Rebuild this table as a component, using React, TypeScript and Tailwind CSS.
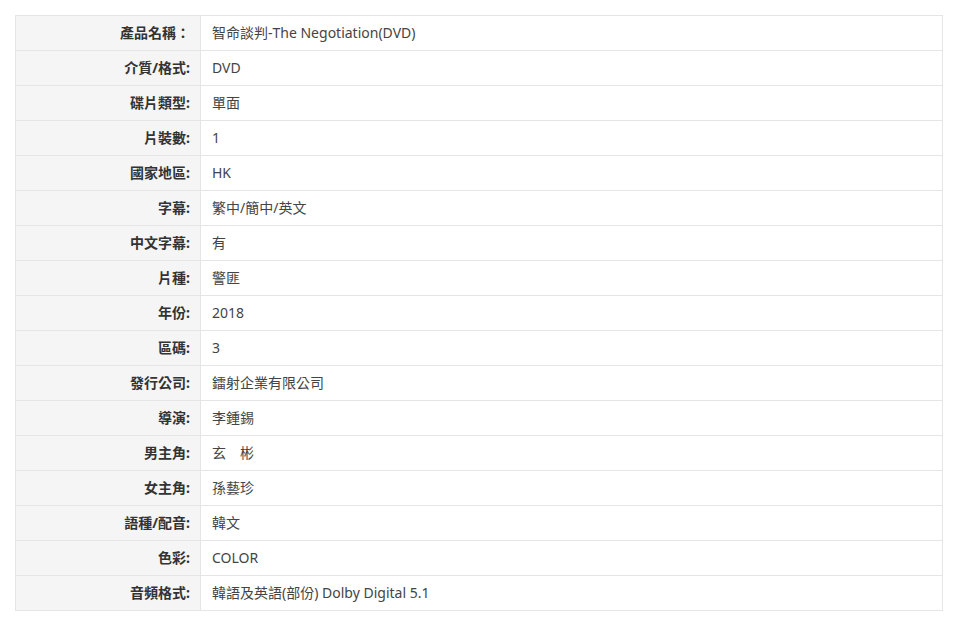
const ROWS: [string, string][] = [
  ["產品名稱：", "智命談判-The Negotiation(DVD)"],
  ["介質/格式:", "DVD"],
  ["碟片類型:", "單面"],
  ["片裝數:", "1"],
  ["國家地區:", "HK"],
  ["字幕:", "繁中/簡中/英文"],
  ["中文字幕:", "有"],
  ["片種:", "警匪"],
  ["年份:", "2018"],
  ["區碼:", "3"],
  ["發行公司:", "鐳射企業有限公司"],
  ["導演:", "李鍾錫"],
  ["男主角:", "玄　彬"],
  ["女主角:", "孫藝珍"],
  ["語種/配音:", "韓文"],
  ["色彩:", "COLOR"],
  ["音頻格式:", "韓語及英語(部份) Dolby Digital 5.1"],
];

export default function App() {
  return (
    <div className="min-h-screen bg-white pt-[15px] pl-[15px] font-['Noto_Sans','Noto_Sans_CJK_TC',sans-serif] text-[14px] text-[#333]">
      <table className="w-[928px] border-collapse border border-[#e5e5e5]">
        <tbody>
          {ROWS.map(([label, value]) => (
            <tr key={label} className="h-[35px]">
              <td className="w-[185px] border border-[#e5e5e5] bg-[#f5f5f5] pr-[10px] text-right font-bold leading-none text-[#333]">
                {label}
              </td>
              <td className="border border-[#e5e5e5] pl-[11px] leading-none text-[#444]">{value}</td>
            </tr>
          ))}
        </tbody>
      </table>
    </div>
  );
}
